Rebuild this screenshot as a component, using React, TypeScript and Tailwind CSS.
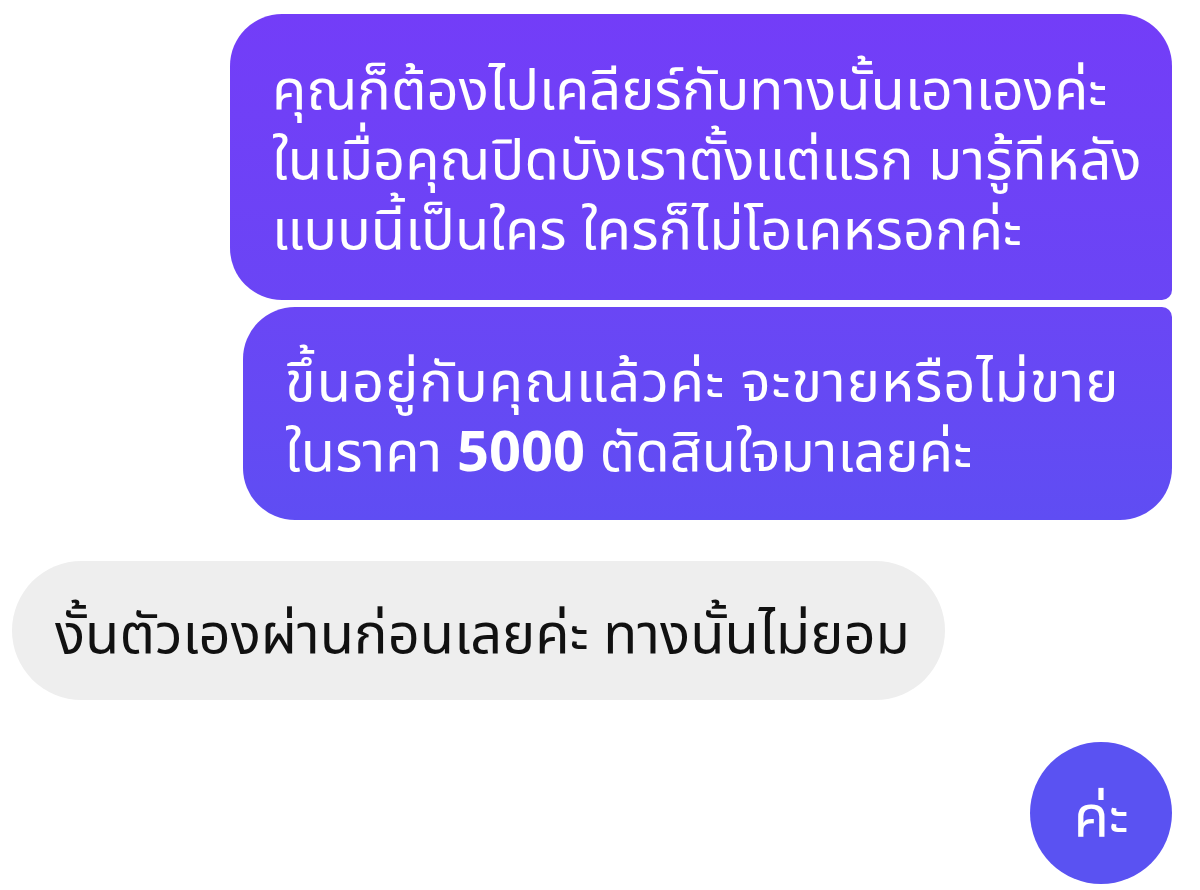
import React from "react";

const thai = { fontFamily: '"Noto Sans", "Noto Sans Thai", "DejaVu Sans", sans-serif' };

export default function App() {
  return (
    <div className="min-h-[890px] w-[1200px] bg-white pt-[14px] pr-[28px] pl-[12px]" style={thai}>
      <div className="flex flex-col">
        <div className="self-end flex h-[286px] w-[942px] flex-col justify-center rounded-[52px] rounded-br-[10px] bg-gradient-to-b from-[#733df8] to-[#6a45f5] pl-[42px] text-[56px] leading-[70px] text-white">
          <div className="whitespace-nowrap">คุณก็ต้องไปเคลียร์กับทางนั้นเอาเองค่ะ</div>
          <div className="whitespace-nowrap">ในเมื่อคุณปิดบังเราตั้งแต่แรก มารู้ทีหลัง</div>
          <div className="whitespace-nowrap">แบบนี้เป็นใคร ใครก็ไม่โอเคหรอกค่ะ</div>
        </div>
        <div className="mt-[7px] self-end flex h-[213px] w-[929px] flex-col justify-center rounded-[52px] rounded-tr-[10px] bg-gradient-to-b from-[#6a46f5] to-[#5f4df3] pl-[42px] text-[56px] leading-[70px] text-white">
          <div className="whitespace-nowrap tracking-[1px]">ขึ้นอยู่กับคุณแล้วค่ะ จะขายหรือไม่ขาย</div>
          <div className="whitespace-nowrap">
            ในราคา <span className="font-bold">5000</span> ตัดสินใจมาเลยค่ะ
          </div>
        </div>
        <div className="mt-[41px] self-start flex h-[139px] w-[933px] items-center rounded-full bg-[#eeeeee] pl-[43px] text-[56px] text-[#111111]">
          <span className="whitespace-nowrap">งั้นตัวเองผ่านก่อนเลยค่ะ ทางนั้นไม่ยอม</span>
        </div>
        <div className="mt-[42px] self-end flex h-[142px] w-[142px] items-center justify-center rounded-full bg-[#5a52f2] text-[58px] text-white">
          ค่ะ
        </div>
      </div>
    </div>
  );
}
